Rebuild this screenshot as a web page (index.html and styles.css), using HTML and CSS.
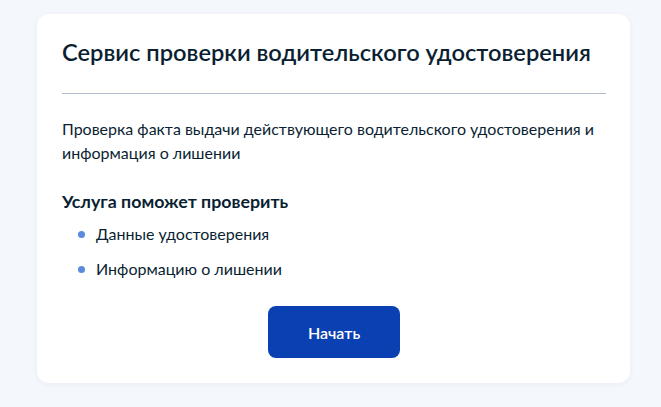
FILE: index.html
```html
<!DOCTYPE html>
<html lang="ru">
<head>
<meta charset="utf-8">
<link rel="stylesheet" href="styles.css">
</head>
<body>
<div class="page">
  <div class="card">
    <h1 class="title">Сервис проверки водительского удостоверения</h1>
    <hr class="divider">
    <p class="lead">Проверка факта выдачи действующего водительского удостоверения и информация о лишении</p>
    <h2 class="subtitle">Услуга поможет проверить</h2>
    <ul class="list">
      <li class="item">Данные удостоверения</li>
      <li class="item">Информацию о лишении</li>
    </ul>
    <div class="actions">
      <button class="btn">Начать</button>
    </div>
  </div>
</div>
</body>
</html>
```
FILE: styles.css
```css
html, body {
  margin: 0;
  padding: 0;
}
body {
  background: #f4f7fc;
  font-family: Lato, "Noto Sans", sans-serif;
  color: #0b1f33;
  width: 661px;
  height: 407px;
  overflow: hidden;
}
.page {
  padding: 14px 0 0 37px;
}
.card {
  box-sizing: border-box;
  width: 593px;
  height: 369px;
  background: #ffffff;
  border-radius: 12px;
  box-shadow: 0 1px 6px rgba(30, 60, 120, 0.05);
  padding: 23px 24px 0 25px;
}
.title {
  margin: 0;
  font-size: 23.7px;
  line-height: 30px;
  font-weight: 600;
  letter-spacing: 0;
}
.divider {
  margin: 26px 0 0 0;
  border: 0;
  height: 1px;
  background: #b2bccb;
}
.lead {
  margin: 23px 0 0 0;
  font-size: 16px;
  line-height: 24px;
  font-weight: 400;
}
.subtitle {
  margin: 24px 0 0 0;
  font-size: 17.8px;
  line-height: 24px;
  font-weight: 700;
}
.list {
  list-style: none;
  margin: 9px 0 0 0;
  padding: 0 0 0 16px;
}
.item {
  display: flex;
  align-items: center;
  gap: 11px;
  font-size: 16px;
  line-height: 24px;
  margin-bottom: 11px;
}
.item::before {
  content: "";
  width: 7px;
  height: 7px;
  border-radius: 50%;
  background: #5a8ae0;
  flex: none;
}
.actions {
  display: flex;
  justify-content: center;
  margin-top: 25px;
}
.btn {
  width: 132px;
  height: 52px;
  border: 0;
  border-radius: 8px;
  background: #0b40b3;
  color: #ffffff;
  font-family: Lato, "Noto Sans", sans-serif;
  font-size: 16px;
  font-weight: 600;
  cursor: pointer;
}
```
